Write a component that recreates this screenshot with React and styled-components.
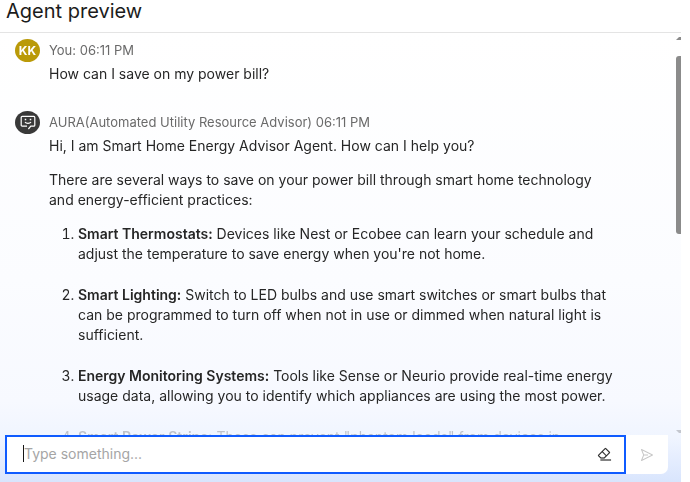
import React from "react";
import styled, { createGlobalStyle } from "styled-components";

const GlobalStyle = createGlobalStyle`
  *, *::before, *::after { box-sizing: border-box; }
  body {
    margin: 0;
    background: #fff;
    color: #262626;
    font-family: Inter, "Noto Sans", sans-serif;
    font-size: 14px;
    line-height: 20px;
  }
  p, h1, ol { margin: 0; }
`;

const Page = styled.div`
  height: 100vh;
  padding-right: 9px;
  display: flex;
  flex-direction: column;
`;

const Header = styled.header`
  flex: none;
  height: 33px;
  padding-left: 6px;
  border-bottom: 1px solid #e4e4e4;
`;

const Title = styled.h1`
  font-size: 20px;
  font-weight: 400;
  line-height: 23px;
  color: #1c1c1c;
`;

const Panel = styled.main`
  flex: 1;
  min-height: 0;
  display: flex;
  flex-direction: column;
  background: linear-gradient(180deg, #ffffff 0%, #fbfcff 55%, #f7f9ff 82%, #f0f5ff 90%, #d9e5fd 100%);
`;

const Viewport = styled.div`
  flex: 1;
  min-height: 0;
  display: flex;
`;

const Messages = styled.section`
  flex: 1;
  min-width: 0;
  overflow: hidden;
  padding: 6px 60px 0 15px;
  display: flex;
  flex-direction: column;
  gap: 27px;
  mask-image: linear-gradient(180deg, #000 93%, rgba(0, 0, 0, 0.25) 98%);
`;

const Message = styled.article`
  flex: none;
  display: grid;
  grid-template-columns: 25px minmax(0, 1fr);
  column-gap: 9px;
`;

const Avatar = styled.div`
  width: 25px;
  height: 23px;
  border-radius: 50%;
  display: grid;
  place-items: center;
  background: ${({ $tone }) => $tone};
  color: #fff;
  font-size: 12px;
  font-weight: 700;
`;

const Sender = styled.p`
  font-size: 13px;
  line-height: 22px;
  color: #6a6a6a;
`;

const Body = styled.div`
  grid-column: 2;
  padding-top: 2px;
  display: flex;
  flex-direction: column;
  gap: 14px;
`;

const Steps = styled.ol`
  padding-left: 29px;
  display: flex;
  flex-direction: column;
  gap: 21px;
`;

const Step = styled.li`
  strong { font-weight: 600; }
`;

const Rail = styled.div`
  flex: none;
  width: 5px;
  padding: 4px 0 2px;
  display: flex;
  flex-direction: column;
  justify-content: space-between;
`;

const Thumb = styled.div`
  height: 178px;
  margin: 16px 0 auto;
  border-radius: 3px 0 0 3px;
  background: #8b8b8b;
`;

const Arrow = styled.svg`
  display: block;
  width: 5px;
  height: 3px;
  flex: none;
`;

const Composer = styled.form`
  flex: none;
  height: 47px;
  padding: 0 13px 8px 5px;
  display: flex;
`;

const Field = styled.div`
  flex: 1;
  min-width: 0;
  display: flex;
  align-items: center;
  padding: 0 12px 2px 16px;
  border: 2px solid #0f5bff;
  background: #fff;
`;

const Caret = styled.span`
  width: 1px;
  height: 17px;
  background: #161616;
`;

const TextInput = styled.input`
  flex: 1;
  min-width: 0;
  padding: 0;
  border: 0;
  outline: 0;
  background: transparent;
  font: inherit;
  color: #262626;
  &::placeholder { color: #a5a5a5; opacity: 1; }
`;

const IconButton = styled.button`
  border: 0;
  padding: 0;
  background: transparent;
  display: grid;
  place-items: center;
  color: #262626;
`;

const SendButton = styled(IconButton)`
  width: 42px;
  background: #fff;
  border-radius: 0 0 7px 0;
  color: #c6c6c6;
`;

const steps = [
  ["Smart Thermostats:", "Devices like Nest or Ecobee can learn your schedule and adjust the temperature to save energy when you're not home."],
  ["Smart Lighting:", "Switch to LED bulbs and use smart switches or smart bulbs that can be programmed to turn off when not in use or dimmed when natural light is sufficient."],
  ["Energy Monitoring Systems:", "Tools like Sense or Neurio provide real-time energy usage data, allowing you to identify which appliances are using the most power."],
  ["Smart Power Strips:", "These can prevent \"phantom loads\" from devices in"],
];

function BotIcon() {
  return (
    <svg width="16" height="15" viewBox="0 0 16 15" fill="none" stroke="#fff" strokeWidth="1.2" aria-hidden="true">
      <path d="M7 11.2H2.2a1 1 0 0 1-1-1V2.4a1 1 0 0 1 1-1h11.6a1 1 0 0 1 1 1v7.8a1 1 0 0 1-1 1h-3L8.4 14" />
      <path d="M5 7c1.2 1.8 4.8 1.8 6 0" />
      <path d="M5.5 3.8v1.5M10.5 3.8v1.5" strokeWidth="1.5" />
    </svg>
  );
}

function EraserIcon() {
  return (
    <svg width="16" height="16" viewBox="0 0 32 32" fill="currentColor" stroke="currentColor" strokeWidth="0.3" aria-hidden="true">
      <path d="M9 27h21v2H9zM27.4 11.7l-7.1-7.1a2 2 0 0 0-2.8 0L4.6 17.5a2 2 0 0 0 0 2.8L9.3 25h7.6l10.5-10.5a2 2 0 0 0 0-2.8ZM16.1 23h-6L6 18.9l6.3-6.3 7.1 7.1Zm4.7-4.7-7.1-7.1L18.9 6l7.1 7.1Z" />
    </svg>
  );
}

function SendIcon() {
  return (
    <svg width="16" height="16" viewBox="0 0 32 32" fill="currentColor" aria-hidden="true">
      <path d="m27.45 15.11-22-11a1 1 0 0 0-1.38 1.28L8.33 16 4.07 26.61a1 1 0 0 0 1.38 1.28l22-11a1 1 0 0 0 0-1.78ZM6.82 24.97 10 17h8v-2h-8L6.82 7.03 24.76 16Z" />
    </svg>
  );
}

export default function App() {
  return (
    <>
      <GlobalStyle />
      <Page>
        <Header>
          <Title>Agent preview</Title>
        </Header>
        <Panel>
          <Viewport>
            <Messages>
              <Message>
                <Avatar $tone="#ba9a08">KK</Avatar>
                <Sender>You: 06:11 PM</Sender>
                <Body>
                  <p>How can I save on my power bill?</p>
                </Body>
              </Message>
              <Message>
                <Avatar $tone="#393939"><BotIcon /></Avatar>
                <Sender>AURA(Automated Utility Resource Advisor) 06:11 PM</Sender>
                <Body>
                  <p>Hi, I am Smart Home Energy Advisor Agent. How can I help you?</p>
                  <p>There are several ways to save on your power bill through smart home technology and energy-efficient practices:</p>
                  <Steps>
                    {steps.map(([name, text]) => (
                      <Step key={name}><strong>{name}</strong> {text}</Step>
                    ))}
                  </Steps>
                </Body>
              </Message>
            </Messages>
            <Rail aria-hidden="true">
              <Arrow viewBox="0 0 5 3"><path d="M0 3 3 0h2v3z" fill="#8b8b8b" /></Arrow>
              <Thumb />
              <Arrow viewBox="0 0 5 3"><path d="M0 0h5v3H3z" fill="#c4c7cf" /></Arrow>
            </Rail>
          </Viewport>
          <Composer onSubmit={(event) => event.preventDefault()}>
            <Field>
              <Caret />
              <TextInput aria-label="Message" placeholder="Type something..." />
              <IconButton type="button" aria-label="Clear conversation"><EraserIcon /></IconButton>
            </Field>
            <SendButton type="submit" aria-label="Send"><SendIcon /></SendButton>
          </Composer>
        </Panel>
      </Page>
    </>
  );
}
